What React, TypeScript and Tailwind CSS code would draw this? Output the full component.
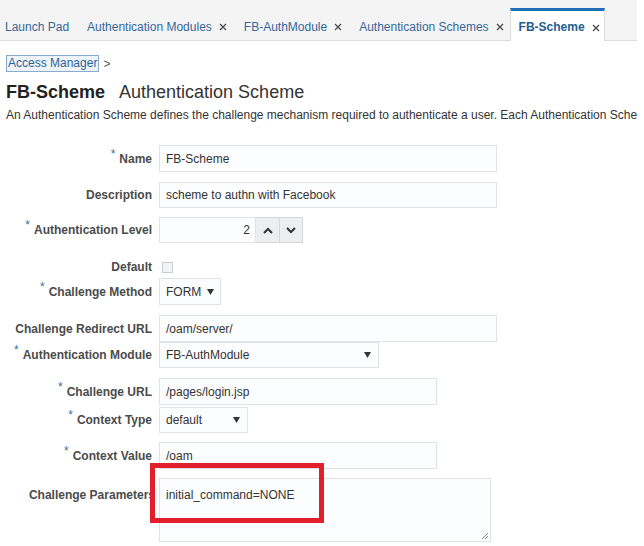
import React from "react";

const X = () => (
  <svg width="8" height="8" viewBox="0 0 8 8" className="ml-[7px] mt-[1px] shrink-0">
    <path d="M1 1L7 7M7 1L1 7" stroke="#4a4a4a" strokeWidth="1.3" />
  </svg>
);

const Tri = () => (
  <svg width="7" height="6" viewBox="0 0 7 6" className="shrink-0">
    <path d="M0 0H7L3.5 6Z" fill="#333" />
  </svg>
);

const Star = () => (
  <span className="text-[#3d6e9c] text-[12px] font-normal relative top-[-5px] mr-[4px]">*</span>
);

function Label({ text, req, className = "" }: { text: string; req?: boolean; className?: string }) {
  return (
    <div className={"w-[152px] shrink-0 text-right text-[12px] font-bold text-[#4b4b4b] whitespace-nowrap " + className}>
      {req && <Star />}
      {text}
    </div>
  );
}

const inputCls =
  "ml-[7px] h-full border border-[#dfe3e6] bg-[#fcfdfe] flex items-center pl-[6px] text-[12px] text-[#333] whitespace-nowrap";

const tabCls = "h-[32px] flex items-center pt-[5px] whitespace-nowrap shrink-0";

export default function App() {
  return (
    <div className="w-[644px] h-[546px] bg-white overflow-hidden" style={{ fontFamily: '"Liberation Sans", Arial, sans-serif' }}>
      <div className="w-[637px] h-[546px] overflow-hidden relative">
        {/* Tab bar */}
        <div className="h-[41px] bg-[#f4f4f4] border-b border-[#dcdcdc] flex items-end pl-[5px] text-[12px] text-[#34679a]">
          <div className={tabCls}>Launch Pad</div>
          <div className={tabCls + " ml-[18px]"}>
            Authentication Modules
            <X />
          </div>
          <div className={tabCls + " ml-[17px]"}>
            FB-AuthModule
            <X />
          </div>
          <div className={tabCls + " ml-[17px]"}>
            Authentication Schemes
            <X />
          </div>
          <div className="h-[33px] mb-[-1px] ml-[6px] shrink-0 whitespace-nowrap bg-white border-t-[3px] border-t-[#1d6fb8] border-x border-x-[#dcdcdc] flex items-center pt-[2px] pl-[8px] pr-[4px] font-bold text-[#245d8c]">
            FB-Scheme
            <X />
          </div>
        </div>

        {/* Breadcrumb */}
        <div className="mt-[14px] ml-[6px] flex items-center text-[12px] text-[#2f6592] h-[17px]">
          <span className="border border-[#8aa9cf] bg-[#eef3fa] px-[1px] leading-[15px]">Access Manager</span>
          <span className="ml-[4px] text-[#555]">&gt;</span>
        </div>

        {/* Heading */}
        <div className="mt-[9px] ml-[6px] flex items-baseline text-[#222] leading-[22px] whitespace-nowrap">
          <span className="text-[18px] font-bold">FB-Scheme</span>
          <span className="text-[18px] ml-[14px] text-[#333]">Authentication Scheme</span>
        </div>
        <div className="mt-[5px] ml-[6px] text-[12px] leading-[14px] text-[#333] whitespace-nowrap">
          An Authentication Scheme defines the challenge mechanism required to authenticate a user. Each Authentication Scheme
        </div>

        {/* Form */}
        <div className="mt-[23px] flex flex-col">
          <div className="flex items-center h-[27px]">
            <Label text="Name" req />
            <div className={inputCls + " w-[338px]"}>FB-Scheme</div>
          </div>
          <div className="flex items-center h-[26px] mt-[10px]">
            <Label text="Description" />
            <div className={inputCls + " w-[338px]"}>scheme to authn with Facebook</div>
          </div>
          <div className="flex items-center h-[26px] mt-[9px]">
            <Label text="Authentication Level" req />
            <div className="ml-[7px] h-full flex">
              <div className="w-[97px] h-full border border-[#dfe3e6] bg-[#fcfdfe] flex items-center justify-end pr-[5px] text-[12px] text-[#333]">2</div>
              <div className="w-[24px] h-full border-y border-r border-[#d3d7db] bg-[#eceef0] flex items-center justify-center">
                <svg width="10" height="7" viewBox="0 0 10 7"><path d="M1 6L5 2L9 6" stroke="#333" strokeWidth="2" fill="none" /></svg>
              </div>
              <div className="w-[23px] h-full border-y border-r border-[#d3d7db] bg-[#eceef0] flex items-center justify-center">
                <svg width="10" height="7" viewBox="0 0 10 7"><path d="M1 1L5 5L9 1" stroke="#333" strokeWidth="2" fill="none" /></svg>
              </div>
            </div>
          </div>
          <div className="flex items-center h-[16px] mt-[16px]">
            <Label text="Default" />
            <div className="ml-[10px] w-[11px] h-[11px] border border-[#c9cdd1] bg-[#f1f3f5]" />
          </div>
          <div className="flex items-center h-[27px] mt-[3px]">
            <Label text="Challenge Method" req />
            <div className={inputCls + " w-[62px] justify-between pr-[6px]"}>
              FORM
              <Tri />
            </div>
          </div>
          <div className="flex items-center h-[27px] mt-[10px]">
            <Label text="Challenge Redirect URL" />
            <div className={inputCls + " w-[338px]"}>/oam/server/</div>
          </div>
          <div className="flex items-center h-[26px]">
            <Label text="Authentication Module" req />
            <div className={inputCls + " w-[220px] justify-between pr-[7px]"}>
              FB-AuthModule
              <Tri />
            </div>
          </div>
          <div className="flex items-center h-[27px] mt-[10px]">
            <Label text="Challenge URL" req />
            <div className={inputCls + " w-[278px]"}>/pages/login.jsp</div>
          </div>
          <div className="flex items-center h-[26px] mt-[2px]">
            <Label text="Context Type" req />
            <div className={inputCls + " w-[89px] justify-between pr-[7px]"}>
              default
              <Tri />
            </div>
          </div>
          <div className="flex items-center h-[27px] mt-[9px]">
            <Label text="Context Value" req />
            <div className={inputCls + " w-[278px]"}>/oam</div>
          </div>
          <div className="flex items-start h-[64px] mt-[9px]">
            <Label text="Challenge Parameters" className="pt-[8px] w-[155px] mr-[-3px]" />
            <div className="ml-[7px] relative w-[332px] h-full border border-[#dfe3e6] bg-[#fcfdfe] pl-[6px] pt-[7px] text-[12px] text-[#333]">
              initial_command=NONE
              <svg width="8" height="8" viewBox="0 0 8 8" className="absolute right-[1px] bottom-[1px]">
                <path d="M7 1L1 7M7 4L4 7" stroke="#888" strokeWidth="1" />
              </svg>
            </div>
          </div>
        </div>

        {/* Red annotation box */}
        <div className="absolute left-[150px] top-[463px] w-[174px] h-[60px] border-[5px] border-[#e1202b]" />
      </div>
    </div>
  );
}
